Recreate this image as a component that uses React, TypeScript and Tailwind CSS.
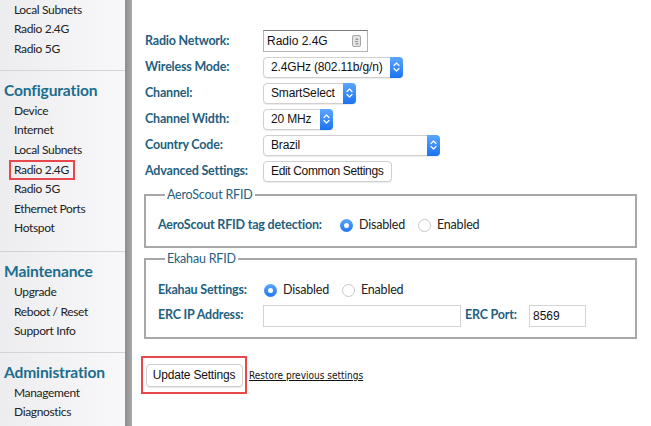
import React from "react";

const labelFont = { fontFamily: "Lato, 'DejaVu Sans', sans-serif" };
const ctrlFont = { fontFamily: "'Liberation Sans', Arial, sans-serif" };

function Item({ children, boxed }: { children: React.ReactNode; boxed?: boolean }) {
  return (
    <div className="h-[19.6px] flex items-center pl-[14px] relative">
      {boxed && (
        <div className="absolute left-[9px] top-[0px] w-[66px] h-[20px] border-2 border-[#e8474c]" />
      )}
      <span className="text-[12px] text-[#222] tracking-[-0.35px]">{children}</span>
    </div>
  );
}

function Header({ children }: { children: React.ReactNode }) {
  return (
    <div className="h-[20px] flex items-center pl-[4px] text-[15.6px] font-bold text-[#1c6d8d] tracking-[-0.15px]">
      {children}
    </div>
  );
}

function Sep() {
  return <div className="h-px bg-[#d4d4d8] w-full" />;
}

function Arrows() {
  return (
    <svg width="7" height="12" viewBox="0 0 7 12" fill="none">
      <path d="M1 4.5 L3.5 2 L6 4.5" stroke="white" strokeWidth="1.2" strokeLinecap="round" strokeLinejoin="round" />
      <path d="M1 7.5 L3.5 10 L6 7.5" stroke="white" strokeWidth="1.2" strokeLinecap="round" strokeLinejoin="round" />
    </svg>
  );
}

function Select({ value, width }: { value: string; width: number }) {
  return (
    <div
      className="h-[21px] flex items-stretch rounded-[4px] border border-[#d0d0d0] bg-white shadow-[0_1px_1px_rgba(0,0,0,0.08)]"
      style={{ width }}
    >
      <div className="flex-1 flex items-center pl-[7px] text-[12px] text-[#111] tracking-[-0.15px]" style={ctrlFont}>
        {value}
      </div>
      <div className="w-[13px] -my-px -mr-px rounded-r-[4px] bg-gradient-to-b from-[#5aa6ff] to-[#1a72f0] flex items-center justify-center">
        <Arrows />
      </div>
    </div>
  );
}

function Radio({ checked, label }: { checked?: boolean; label: string }) {
  return (
    <div className="flex items-center gap-[6px]">
      {checked ? (
        <div className="w-[13px] h-[13px] rounded-full bg-gradient-to-b from-[#5aa6ff] to-[#1f76f2] flex items-center justify-center">
          <div className="w-[5px] h-[5px] rounded-full bg-white" />
        </div>
      ) : (
        <div className="w-[13px] h-[13px] rounded-full border border-[#c8c8c8] bg-white" />
      )}
      <span className="text-[12.5px] text-[#222] tracking-[-0.2px]" style={labelFont}>{label}</span>
    </div>
  );
}

const lbl = "text-[12.5px] font-bold text-[#1f607f] tracking-[-0.2px] whitespace-nowrap";

function Row({ label, children }: { label: string; children: React.ReactNode }) {
  return (
    <div className="h-[26px] flex items-center">
      <div className={`w-[118px] ${lbl}`} style={labelFont}>
        {label}
      </div>
      {children}
    </div>
  );
}

export default function App() {
  return (
    <div className="w-[651px] h-[426px] flex overflow-hidden bg-white" style={labelFont}>
      <aside className="w-[125px] shrink-0 bg-gradient-to-r from-[#ededf0] to-[#f8f8fa] flex flex-col">
        <div className="h-[19.5px] flex items-center pl-[14px] text-[12px] text-[#222] tracking-[-0.35px]">Local Subnets</div>
        <div className="h-[19.5px] flex items-center pl-[14px] text-[12px] text-[#222] tracking-[-0.35px]">Radio 2.4G</div>
        <div className="h-[19.5px] flex items-center pl-[14px] text-[12px] text-[#222] tracking-[-0.35px]">Radio 5G</div>
        <div className="h-[11.5px]" />
        <Sep />
        <div className="h-[10px]" />
        <Header>Configuration</Header>
        <Item>Device</Item>
        <Item>Internet</Item>
        <Item>Local Subnets</Item>
        <Item boxed>Radio 2.4G</Item>
        <Item>Radio 5G</Item>
        <Item>Ethernet Ports</Item>
        <Item>Hotspot</Item>
        <div className="h-[13px]" />
        <Sep />
        <div className="h-[10px]" />
        <Header>Maintenance</Header>
        <Item>Upgrade</Item>
        <Item>Reboot / Reset</Item>
        <Item>Support Info</Item>
        <div className="h-[11px]" />
        <Sep />
        <div className="h-[10px]" />
        <Header>Administration</Header>
        <Item>Management</Item>
        <Item>Diagnostics</Item>
      </aside>
      <div className="w-[7px] shrink-0 bg-gradient-to-r from-[#8e8e90] to-[#a9a9ab]" />
      <main className="flex-1 pl-[13px] pt-[28px]">
        <Row label="Radio Network:">
          <div className="w-[105px] h-[22px] border border-[#b4b4b4] border-t-[#7a7a7a] flex items-center pl-[3px] pr-[6px] justify-between">
            <span className="text-[12px] text-[#111]" style={ctrlFont}>Radio 2.4G</span>
            <div className="w-[9px] h-[12px] rounded-[2px] border border-[#a8a8a8] bg-[#e4e4e4] flex flex-col items-center justify-center gap-[1px]">
              <div className="w-0 h-0 border-l-[2px] border-r-[2px] border-b-[2px] border-l-transparent border-r-transparent border-b-[#999]" />
              <div className="w-[3px] h-px bg-[#999]" />
              <div className="w-0 h-0 border-l-[2px] border-r-[2px] border-t-[2px] border-l-transparent border-r-transparent border-t-[#999]" />
            </div>
          </div>
        </Row>
        <Row label="Wireless Mode:">
          <Select value="2.4GHz (802.11b/g/n)" width={140} />
        </Row>
        <Row label="Channel:">
          <Select value="SmartSelect" width={93} />
        </Row>
        <Row label="Channel Width:">
          <Select value="20 MHz" width={70} />
        </Row>
        <Row label="Country Code:">
          <Select value="Brazil" width={177} />
        </Row>
        <Row label="Advanced Settings:">
          <button className="h-[21px] w-[129px] rounded-[4px] border border-[#cfcfcf] bg-white shadow-[0_1px_1px_rgba(0,0,0,0.08)] text-[12px] text-[#111] text-left pl-[7px] tracking-[-0.35px] whitespace-nowrap" style={ctrlFont}>
            Edit Common Settings
          </button>
        </Row>

        <fieldset className="mt-[5px] -ml-[1px] w-[493px] h-[59px] border-2 border-[#a8a8a8] pl-[12px] pt-[11px] m-0">
          <legend className="ml-[7px] px-[2px] text-[12.5px] text-[#1f607f] leading-[12px] tracking-[-0.2px]">AeroScout RFID</legend>
          <div className="flex items-center h-[26px]">
            <div className={`w-[182px] ${lbl}`}>AeroScout RFID tag detection:</div>
            <div className="flex items-center gap-[13px]">
              <Radio checked label="Disabled" />
              <Radio label="Enabled" />
            </div>
          </div>
        </fieldset>

        <fieldset className="mt-[5px] -ml-[1px] w-[493px] h-[86px] border-2 border-[#a8a8a8] pl-[12px] pt-[14px] m-0">
          <legend className="ml-[7px] px-[2px] text-[12.5px] text-[#1f607f] leading-[12px] tracking-[-0.2px]">Ekahau RFID</legend>
          <div className="flex items-center h-[22px]">
            <div className={`w-[106px] ${lbl}`}>Ekahau Settings:</div>
            <div className="flex items-center gap-[13px]">
              <Radio checked label="Disabled" />
              <Radio label="Enabled" />
            </div>
          </div>
          <div className="flex items-center h-[27px] mt-[1px]">
            <div className={`w-[105px] ${lbl}`}>ERC IP Address:</div>
            <div className="w-[198px] h-[22px] border border-[#d4d4d4]" />
            <div className={`w-[68px] pl-[4px] ${lbl}`}>ERC Port:</div>
            <div className="w-[57px] h-[22px] border border-[#d4d4d4] flex items-center pl-[3px] text-[12px] text-[#111]" style={ctrlFont}>
              8569
            </div>
          </div>
        </fieldset>

        <div className="mt-[17px] flex items-center">
          <div className="-ml-[4px] border-2 border-[#e8474c] w-[106px] h-[38px] flex items-center justify-center">
            <button className="h-[23px] w-[97px] rounded-[4px] border border-[#d0d0d0] bg-white shadow-[0_1px_1px_rgba(0,0,0,0.1)] text-[12px] text-[#111] tracking-[-0.2px]" style={ctrlFont}>
              Update Settings
            </button>
          </div>
          <a className="ml-[2px] text-[10px] text-[#111] underline" style={{ fontFamily: "'DejaVu Sans Condensed', 'DejaVu Sans', sans-serif" }}>
            Restore previous settings
          </a>
        </div>
      </main>
    </div>
  );
}
